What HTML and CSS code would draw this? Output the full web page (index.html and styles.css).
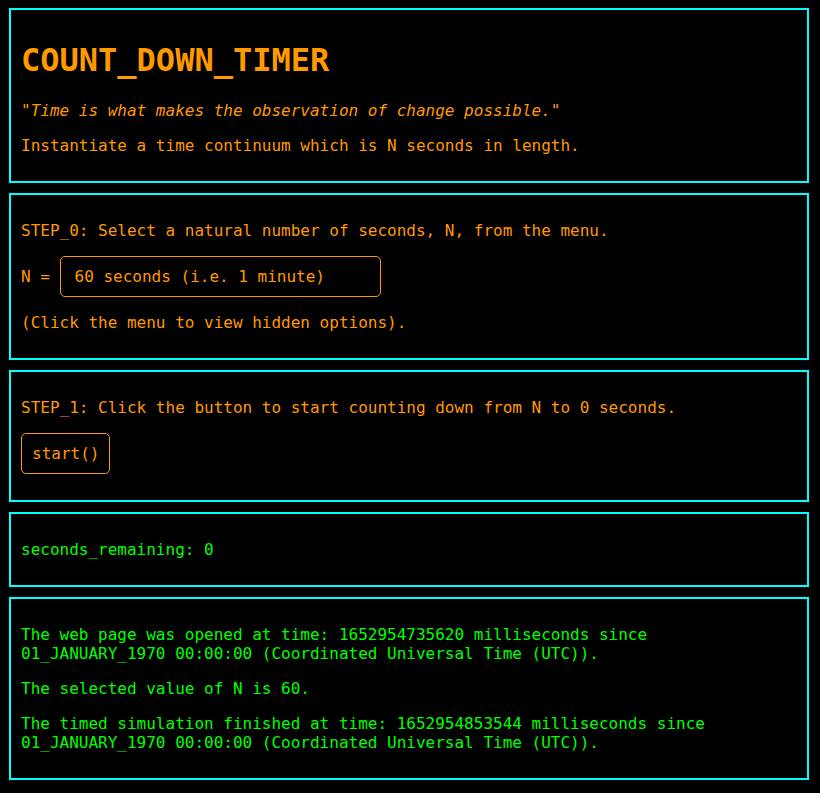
FILE: index.html
```html
<!DOCTYPE html>
<html>
<head>
<meta charset="utf-8">
<title>COUNT_DOWN_TIMER</title>
<link rel="stylesheet" href="styles.css">
</head>
<body>
<div class="page">
  <div class="box orange">
    <h1 class="title">COUNT_DOWN_TIMER</h1>
    <p class="quote">"Time is what makes the observation of change possible."</p>
    <p>Instantiate a time continuum which is N seconds in length.</p>
  </div>
  <div class="box orange">
    <p>STEP_0: Select a natural number of seconds, N, from the menu.</p>
    <p class="ctrl-line">N = <span class="menu">60 seconds (i.e. 1 minute)</span></p>
    <p>(Click the menu to view hidden options).</p>
  </div>
  <div class="box orange">
    <p>STEP_1: Click the button to start counting down from N to 0 seconds.</p>
    <p class="ctrl-line"><button class="btn">start()</button></p>
  </div>
  <div class="box green">
    <p>seconds_remaining: 0</p>
  </div>
  <div class="box green">
    <p>The web page was opened at time: 1652954735620 milliseconds since<br>01_JANUARY_1970 00:00:00 (Coordinated Universal Time (UTC)).</p>
    <p>The selected value of N is 60.</p>
    <p>The timed simulation finished at time: 1652954853544 milliseconds since<br>01_JANUARY_1970 00:00:00 (Coordinated Universal Time (UTC)).</p>
  </div>
</div>
</body>
</html>
```
FILE: styles.css
```css
html, body {
  background: #000000;
}
body {
  margin: 8px 9px;
  font-family: "DejaVu Sans Mono", "Liberation Mono", monospace;
  font-size: 16px;
}
.page {
  width: 800px;
  display: flex;
  flex-direction: column;
  gap: 10px;
}
.box {
  box-sizing: border-box;
  width: 800px;
  border: 2px solid #00ffff;
  padding: 10px;
}
.orange {
  color: #ff9900;
}
.green {
  color: #00ff00;
}
p {
  margin: 16px 0;
}
.title {
  font-size: 32px;
  font-weight: bold;
  margin: 21.44px 0;
}
.quote {
  font-style: italic;
}
.ctrl-line {
  line-height: 41px;
  height: 41px;
}
.menu {
  display: inline-block;
  box-sizing: border-box;
  width: 321px;
  height: 41px;
  line-height: 19px;
  padding: 10px 14px;
  border: 1px solid #ff9900;
  border-radius: 5px;
  color: #ff9900;
  vertical-align: top;
}
.btn {
  display: inline-block;
  box-sizing: border-box;
  height: 41px;
  padding: 10px;
  margin: 0;
  font-family: inherit;
  font-size: 16px;
  line-height: 19px;
  background: #000000;
  color: #ff9900;
  border: 1px solid #ff9900;
  border-radius: 5px;
  vertical-align: top;
}
```
